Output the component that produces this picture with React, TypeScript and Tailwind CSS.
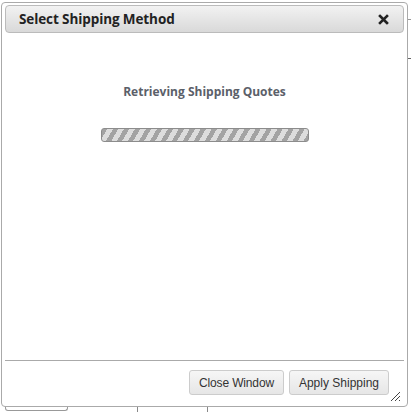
import React from 'react';

const CloseIcon: React.FC = () => (
  <svg width="11" height="11" viewBox="0 0 11 11" className="text-[#222]">
    <path d="M2 2 L9 9 M9 2 L2 9" stroke="currentColor" strokeWidth="2.6" strokeLinecap="square" />
  </svg>
);

const ResizeGrip: React.FC = () => (
  <svg width="12" height="12" viewBox="0 0 12 12" className="absolute right-[3px] bottom-[2px]">
    <path d="M11 2 L2 11 M11 6 L6 11 M11 10 L10 11" stroke="#444" strokeWidth="1" />
  </svg>
);

export default function App() {
  return (
    <div className="relative w-[411px] h-[412px] bg-white overflow-hidden font-['Liberation_Sans',Arial,sans-serif]">
      {/* page behind the dialog */}
      <div className="absolute left-0 right-0 bottom-0 h-[6px] flex">
        <div className="ml-[5px] w-[63px] h-[5px] border-x border-b border-[#999] rounded-b-[3px]" />
        <div className="ml-[69px] w-px bg-[#888]" />
        <div className="ml-[69px] w-px bg-[#888]" />
      </div>
      <div className="absolute right-0 top-[19px] w-[3px] h-px bg-[#999]" />
      <div className="absolute right-0 top-[58px] w-[3px] h-px bg-[#666]" />

      {/* dialog */}
      <div className="absolute left-[1px] top-[2px] w-[407px] h-[405px] bg-white border border-[#aaa] rounded-[4px] flex flex-col p-[2px]">
        <div className="h-[28px] mx-px flex items-center justify-between px-[13px] border border-[#bbb] rounded-[4px] bg-gradient-to-b from-[#f2f2f2] to-[#d9d9d9]">
          <span className="text-[13.5px] font-bold text-[#222] font-['Open_Sans',sans-serif] tracking-[-0.1px]">
            Select Shipping Method
          </span>
          <span className="mr-px flex items-center">
            <CloseIcon />
          </span>
        </div>

        <div className="flex-1 flex flex-col items-center">
          <div className="mt-[50px] text-[12px] font-bold text-[#5b6069] font-['Open_Sans',sans-serif]">
            Retrieving Shipping Quotes
          </div>
          <div className="mt-[27px] w-[208px] h-[14px] rounded-[3px] border border-[#8c8c8c] bg-[repeating-linear-gradient(120deg,#a3a3a3_0_4.5px,#dddddd_4.5px_9.5px)]" />
        </div>

        <div className="relative h-[44px] mx-px border-t border-[#aaa] flex items-start justify-end gap-[5px] pt-[9px] pr-[15px]">
          <button className="h-[25px] px-[9px] text-[12px] text-[#333] tracking-[-0.15px] border border-[#ccc] rounded-[3px] bg-gradient-to-b from-[#f6f6f6] to-[#e6e6e6]">
            Close Window
          </button>
          <button className="h-[25px] px-[9px] text-[12px] text-[#333] border border-[#ccc] rounded-[3px] bg-gradient-to-b from-[#f6f6f6] to-[#e6e6e6]">
            Apply Shipping
          </button>
          <ResizeGrip />
        </div>
      </div>
    </div>
  );
}
